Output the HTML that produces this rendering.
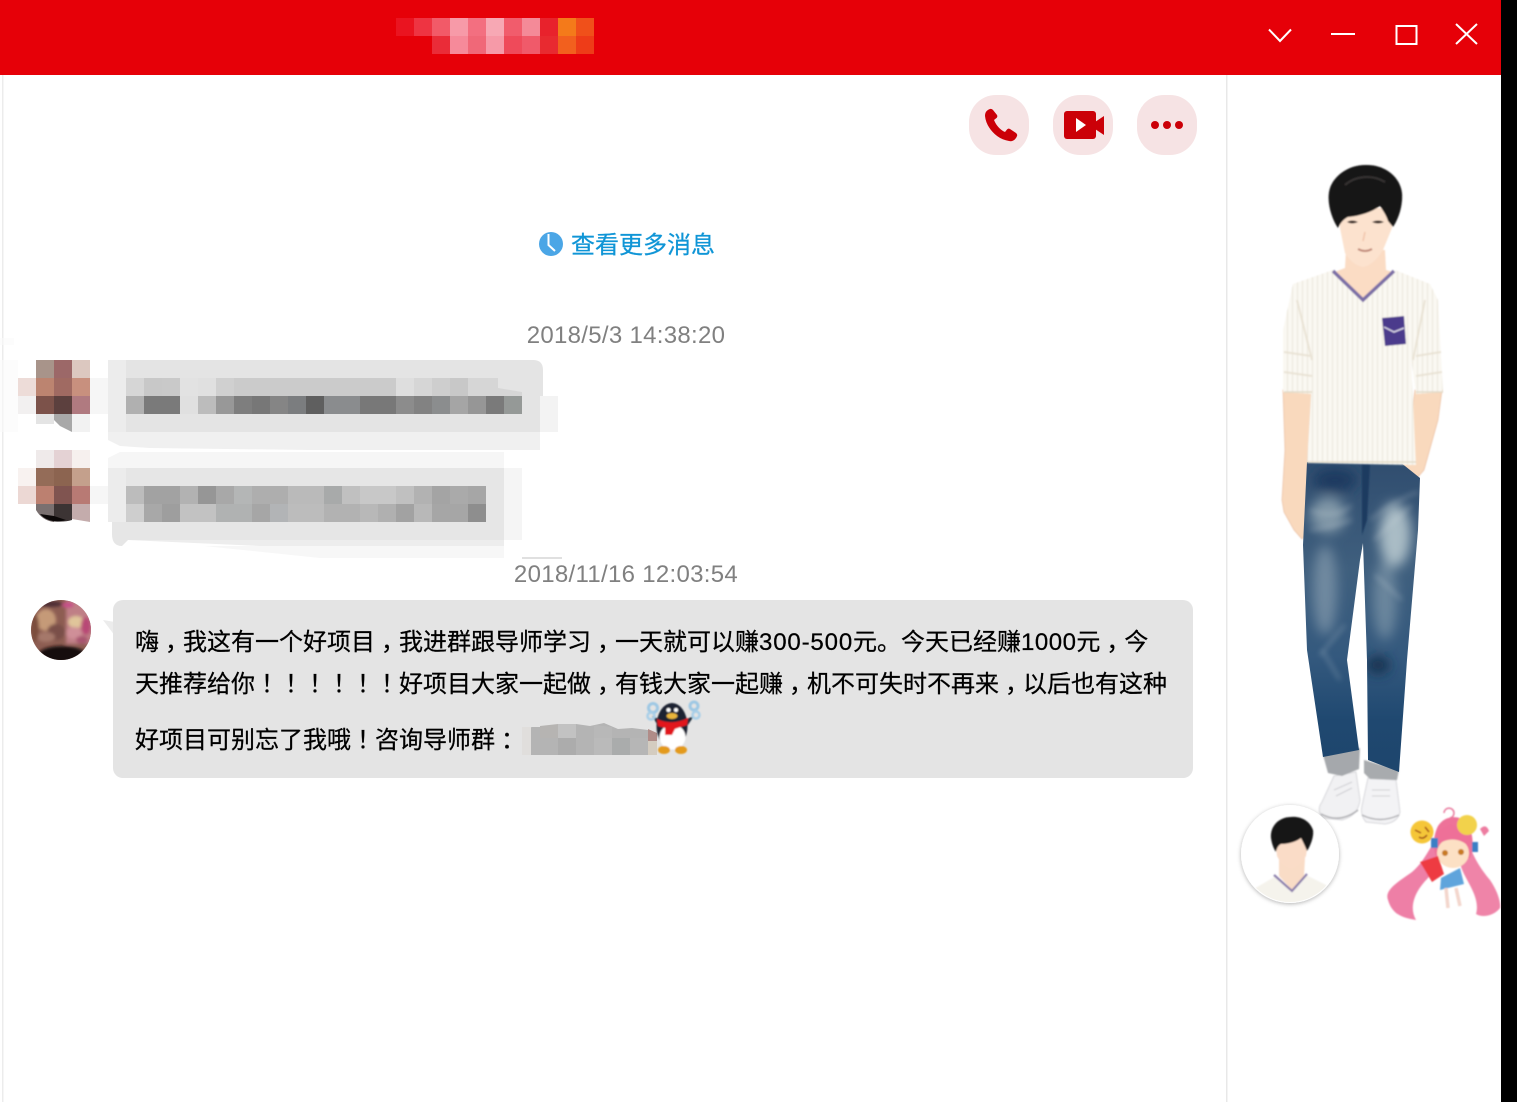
<!DOCTYPE html>
<html lang="zh"><head><meta charset="utf-8"><title>聊天</title>
<style>
html,body{margin:0;padding:0;background:#fff;width:1517px;height:1102px;overflow:hidden}
#g{position:absolute;left:0;top:0}
.t{position:absolute;white-space:nowrap;font-family:"Liberation Sans","Noto Sans CJK SC",sans-serif;font-size:24px;line-height:30px;color:#000;-webkit-text-stroke:.25px currentColor}
.c{color:#808080;width:300px;text-align:center;left:476px;-webkit-text-stroke:0}
.p{position:relative;left:6px}
.d{letter-spacing:.85px}
.e{letter-spacing:.5px}
</style></head><body>
<svg id="g" width="1517" height="1102" viewBox="0 0 1517 1102" xmlns="http://www.w3.org/2000/svg">
<defs>
<filter id="b1" x="-10%" y="-10%" width="120%" height="120%"><feGaussianBlur stdDeviation=".7"/></filter>
<filter id="b2" x="-30%" y="-30%" width="160%" height="160%"><feGaussianBlur stdDeviation="1.500"/></filter>
<filter id="b3" x="-30%" y="-30%" width="160%" height="160%"><feGaussianBlur stdDeviation="3"/></filter>
<filter id="b6" x="-50%" y="-50%" width="200%" height="200%"><feGaussianBlur stdDeviation="6"/></filter>
<filter id="sh" x="-20%" y="-20%" width="140%" height="140%"><feDropShadow dx="0" dy="1" stdDeviation="2" flood-color="#000" flood-opacity=".3"/></filter>
<linearGradient id="jean" x1="0" y1="0" x2="0" y2="1"><stop offset="0" stop-color="#2f4c6e"/><stop offset=".35" stop-color="#3f5f7e"/><stop offset=".62" stop-color="#34597e"/><stop offset=".82" stop-color="#1f4870"/><stop offset="1" stop-color="#1e456c"/></linearGradient>
<pattern id="stripe" width="5" height="6" patternUnits="userSpaceOnUse"><rect width="5" height="6" fill="#faf8f2"/><rect x="2" width="1" height="6" fill="#ebe7dc"/></pattern>
<clipPath id="av"><circle cx="61" cy="630" r="30"/></clipPath>
<clipPath id="av2"><circle cx="1290" cy="854" r="48"/></clipPath>
<clipPath id="jc"><path d="M1307 462 L1400 462 L1420 478 L1418 530 L1407 660 L1399 772 L1368 760 L1367 660 L1363 543 L1360 560 L1347 660 L1359 750 L1323 757 L1307 650 L1303 545Z"/></clipPath>
</defs>

<!-- frame -->
<rect x="2" y="75" width="1.5" height="1027" fill="#ececec"/>
<rect x="1226" y="75" width="1.5" height="1027" fill="#e8e8e8"/>
<rect x="0" y="0" width="1501" height="75" fill="#e60008"/>
<rect x="1501" y="0" width="16" height="1102" fill="#000"/>

<!-- mosaic title -->
<g>
<rect x="396" y="18" width="18" height="18" fill="#ea1420"/><rect x="414" y="18" width="18" height="18" fill="#ee3442"/><rect x="432" y="18" width="18" height="18" fill="#f25a68"/><rect x="450" y="18" width="18" height="18" fill="#f79aa8"/><rect x="468" y="18" width="18" height="18" fill="#f36f80"/><rect x="486" y="18" width="18" height="18" fill="#f7a8b4"/><rect x="504" y="18" width="18" height="18" fill="#f15c6c"/><rect x="522" y="18" width="18" height="18" fill="#f48a98"/><rect x="540" y="18" width="18" height="18" fill="#e8222c"/><rect x="558" y="18" width="18" height="18" fill="#f47a1a"/><rect x="576" y="18" width="18" height="18" fill="#f0501a"/>
<rect x="432" y="36" width="18" height="18" fill="#ea2c38"/><rect x="450" y="36" width="18" height="18" fill="#f68a9a"/><rect x="468" y="36" width="18" height="18" fill="#f06878"/><rect x="486" y="36" width="18" height="18" fill="#f69aa8"/><rect x="504" y="36" width="18" height="18" fill="#ef4a5a"/><rect x="522" y="36" width="18" height="18" fill="#f05a6a"/><rect x="540" y="36" width="18" height="18" fill="#e82a30"/><rect x="558" y="36" width="18" height="18" fill="#f2601e"/><rect x="576" y="36" width="18" height="18" fill="#ee3c18"/>
</g>

<!-- window controls -->
<g fill="none" stroke="#fff" stroke-width="2">
<path d="M1269 29.5 L1280 41 L1291 29.5"/>
<path d="M1331 34 H1355"/>
<rect x="1396.5" y="26" width="20" height="18"/>
<path d="M1456 24 L1477 44 M1477 24 L1456 44"/>
</g>

<!-- action buttons -->
<g fill="#f6e3e4">
<rect x="969" y="95" width="60" height="60" rx="27"/>
<rect x="1053" y="95" width="60" height="60" rx="27"/>
<rect x="1137" y="95" width="60" height="60" rx="27"/>
</g>
<g fill="#cb0008">
<path d="M990 109 C987 110 985 112 985 116 C986 127 996 139 1009 141 C1013 142 1016 139 1017 136 C1017.500 135 1017 134 1016 133 L1010 129 C1009 128.500 1008 128.500 1007 129.500 L1005 132 C1000 130 996 125 994 120 L996.500 118 C997.500 117 997.500 116 997 115 L993 110 C992 109 991 108.700 990 109Z"/>
<rect x="1064" y="111" width="32" height="28" rx="3"/>
<path d="M1095 122 L1104 116 V135 L1095 129Z"/>
<circle cx="1155" cy="125" r="4"/><circle cx="1167" cy="125" r="4"/><circle cx="1179" cy="125" r="4"/>
</g>
<path d="M1076 118 L1086 125 L1076 132Z" fill="#fff"/>

<!-- clock -->
<circle cx="551" cy="244" r="12" fill="#4ba6e6"/>
<path d="M548.500 234 V245 L555 251" fill="none" stroke="#fff" stroke-width="2"/>

<!-- mosaic avatars -->
<g>
<rect x="36" y="360" width="18" height="18" fill="#a8948a"/><rect x="54" y="360" width="18" height="18" fill="#9c6868"/><rect x="72" y="360" width="18" height="18" fill="#dcc8c0"/>
<rect x="18" y="378" width="18" height="18" fill="#eddcd8"/><rect x="36" y="378" width="18" height="18" fill="#bc8470"/><rect x="54" y="378" width="18" height="18" fill="#a06a62"/><rect x="72" y="378" width="18" height="18" fill="#c8907e"/>
<rect x="18" y="396" width="18" height="18" fill="#f2f0f0"/><rect x="36" y="396" width="18" height="18" fill="#7c524a"/><rect x="54" y="396" width="18" height="18" fill="#5c403e"/><rect x="72" y="396" width="18" height="18" fill="#b07a80"/>
<rect x="36" y="414" width="18" height="10" fill="#e4e4e4"/><path d="M54 414H72V432L60 426L54 420Z" fill="#a8a8a8"/><rect x="72" y="414" width="18" height="18" fill="#f2f2f2"/>
<rect x="36" y="450" width="18" height="18" fill="#efeaea"/><rect x="54" y="450" width="18" height="18" fill="#e4d2d4"/><rect x="72" y="450" width="18" height="18" fill="#f6f0ee"/>
<rect x="18" y="468" width="18" height="18" fill="#f8f2f0"/><rect x="36" y="468" width="18" height="18" fill="#946c58"/><rect x="54" y="468" width="18" height="18" fill="#8c6450"/><rect x="72" y="468" width="18" height="18" fill="#c4a08c"/>
<rect x="18" y="486" width="18" height="18" fill="#ecd8d4"/><rect x="36" y="486" width="18" height="18" fill="#bc8070"/><rect x="54" y="486" width="18" height="18" fill="#805450"/><rect x="72" y="486" width="18" height="18" fill="#b87a74"/>
<path d="M36 504H54V522C46 521 40 517 36 510Z" fill="#7a7070"/><path d="M54 504H72V520C66 522 58 522 50 521L54 521Z" fill="#3c3434"/><path d="M40 514C46 521 56 523 66 520L54 516Z" fill="#0c0808"/><path d="M72 504H90V522L72 519Z" fill="#c4acac"/>
</g>

<!-- mosaic bubble 1 -->
<path d="M108 360H533Q543 360 543 370V432H108Z" fill="#e4e4e4"/>
<rect x="108" y="360" width="18" height="72" fill="#ececec"/>
<path d="M108 432H540V450H310L150 448L120 446L108 440Z" fill="#f0f0f0"/>
<rect x="540" y="396" width="18" height="36" fill="#f3f3f3"/>
<path d="M0 338H14V345H0ZM0 360H18V432H0Z" fill="#fafafa" opacity=".6"/>
<g>
<rect x="90" y="378" width="18" height="36" fill="#f6f6f6"/>
<rect x="126" y="378" width="18" height="18" fill="#d6d6d6"/><rect x="144" y="378" width="18" height="18" fill="#c8c8c8"/><rect x="162" y="378" width="18" height="18" fill="#c9c9c9"/><rect x="180" y="378" width="18" height="18" fill="#e2e2e2"/><rect x="198" y="378" width="18" height="18" fill="#e0e0e0"/><rect x="216" y="378" width="18" height="18" fill="#d0d0d0"/><rect x="234" y="378" width="162" height="18" fill="#cbcbcb"/><rect x="396" y="378" width="18" height="18" fill="#dedede"/><rect x="414" y="378" width="18" height="18" fill="#d6d6d6"/><rect x="432" y="378" width="18" height="18" fill="#cecece"/><rect x="450" y="378" width="18" height="18" fill="#c8c8c8"/><path d="M468 378H498V388L522 392V396H468Z" fill="#d6d6d6"/>
<rect x="126" y="396" width="18" height="18" fill="#b0b0b0"/><rect x="144" y="396" width="36" height="18" fill="#7a7a7a"/><rect x="180" y="396" width="18" height="18" fill="#e0e0e0"/><rect x="198" y="396" width="18" height="18" fill="#bcbcbc"/><rect x="216" y="396" width="18" height="18" fill="#989898"/><rect x="234" y="396" width="18" height="18" fill="#7e7e7e"/><rect x="252" y="396" width="18" height="18" fill="#777"/><rect x="270" y="396" width="18" height="18" fill="#858585"/><rect x="288" y="396" width="18" height="18" fill="#7b7d7f"/><rect x="306" y="396" width="18" height="18" fill="#5f5f5f"/><rect x="324" y="396" width="36" height="18" fill="#8a8c8e"/><rect x="360" y="396" width="36" height="18" fill="#787878"/><rect x="396" y="396" width="18" height="18" fill="#8c8c8c"/><rect x="414" y="396" width="18" height="18" fill="#828282"/><rect x="432" y="396" width="18" height="18" fill="#8b8d8e"/><rect x="450" y="396" width="18" height="18" fill="#a5a5a5"/><rect x="468" y="396" width="18" height="18" fill="#969696"/><rect x="486" y="396" width="18" height="18" fill="#7a7a7a"/><rect x="504" y="396" width="18" height="18" fill="#959997"/>
</g>

<!-- mosaic bubble 2 -->
<path d="M108 468H504V540H128L122 546Q112 546 112 534V522H108Z" fill="#e6e6e6"/>
<path d="M128 540H504V546L260 546Z" fill="#ededed"/>
<rect x="108" y="468" width="18" height="54" fill="#ececec"/>
<rect x="504" y="468" width="18" height="72" fill="#f5f5f5"/>
<path d="M120 452H504V468H108V458Z" fill="#f6f6f6"/>
<path d="M204 546H504V558H320Z" fill="#f7f7f7"/>
<rect x="90" y="486" width="18" height="18" fill="#f6f6f6"/>
<rect x="522" y="557" width="40" height="2" fill="#e0e0e0"/>
<g>
<rect x="126" y="486" width="18" height="18" fill="#bcbcbc"/><rect x="144" y="486" width="36" height="18" fill="#a2a2a2"/><rect x="180" y="486" width="18" height="18" fill="#b2b2b2"/><rect x="198" y="486" width="18" height="18" fill="#969696"/><rect x="216" y="486" width="18" height="18" fill="#a8a8a8"/><rect x="234" y="486" width="18" height="18" fill="#b4b6b6"/><rect x="252" y="486" width="36" height="18" fill="#aeaeae"/><rect x="288" y="486" width="36" height="18" fill="#bababa"/><rect x="324" y="486" width="18" height="18" fill="#a8aaaa"/><rect x="342" y="486" width="18" height="18" fill="#c0c0c0"/><rect x="360" y="486" width="36" height="18" fill="#c8c8c8"/><rect x="396" y="486" width="18" height="18" fill="#c0c0c0"/><rect x="414" y="486" width="18" height="18" fill="#b2b2b2"/><rect x="432" y="486" width="18" height="18" fill="#a4a4a4"/><rect x="450" y="486" width="18" height="18" fill="#aaa"/><rect x="468" y="486" width="18" height="18" fill="#a6a6a6"/>
<rect x="126" y="504" width="18" height="18" fill="#cecece"/><rect x="144" y="504" width="18" height="18" fill="#a8a8a8"/><rect x="162" y="504" width="18" height="18" fill="#9e9e9e"/><rect x="180" y="504" width="36" height="18" fill="#c2c2c2"/><rect x="216" y="504" width="36" height="18" fill="#b0b2b2"/><rect x="252" y="504" width="18" height="18" fill="#a6a6a6"/><rect x="270" y="504" width="18" height="18" fill="#b2b4b6"/><rect x="288" y="504" width="36" height="18" fill="#bcbcbc"/><rect x="324" y="504" width="36" height="18" fill="#b2b2b2"/><rect x="360" y="504" width="18" height="18" fill="#b8b8b8"/><rect x="378" y="504" width="18" height="18" fill="#b0b0b0"/><rect x="396" y="504" width="18" height="18" fill="#a2a2a2"/><rect x="414" y="504" width="18" height="18" fill="#b8b8b8"/><rect x="432" y="504" width="36" height="18" fill="#a6a6a6"/><rect x="468" y="504" width="18" height="18" fill="#8e8e8e"/>
</g>

<!-- third avatar -->
<g clip-path="url(#av)">
<rect x="31" y="600" width="60" height="60" fill="#8d5d52"/>
<g filter="url(#b2)">
<rect x="66" y="600" width="28" height="44" fill="#bf7f86"/>
<ellipse cx="76" cy="622" rx="8" ry="6" fill="#e0c59a"/>
<ellipse cx="74" cy="633" rx="8" ry="6" fill="#cf8f98"/>
<ellipse cx="86" cy="626" rx="5" ry="9" fill="#b84a76"/>
<ellipse cx="82" cy="640" rx="6" ry="4" fill="#a85470"/>
<ellipse cx="46" cy="620" rx="10" ry="11" fill="#c59a78"/>
<ellipse cx="56" cy="632" rx="9" ry="8" fill="#7a5048"/>
<ellipse cx="46" cy="637" rx="9" ry="5" fill="#a5786a"/>
<ellipse cx="62" cy="655" rx="24" ry="9" fill="#17110f"/>
<ellipse cx="35" cy="628" rx="4" ry="14" fill="#7c4d3e"/>
<ellipse cx="50" cy="604" rx="13" ry="3" fill="#4e2f36"/>
<ellipse cx="68" cy="605" rx="6" ry="3" fill="#c65088"/>
</g>
</g>

<!-- bubble 3 -->
<path d="M103 620 L115 622 V636Z" fill="#ececec"/>
<rect x="113" y="600" width="1080" height="178" rx="10" fill="#e4e4e4"/>
<!-- mosaic number -->
<path d="M522 755V730L532 727H540L556 725L576 724L590 726L604 723L618 729L632 728L648 730L657 735V755Z" fill="#b4b4b4"/>
<rect x="522" y="727" width="9" height="28" fill="#e0dedc"/>
<path d="M558 724L576 724V738H558Z" fill="#c2c2c2"/>
<path d="M540 726L558 724V738H540Z" fill="#b6b4b2"/>
<path d="M594 725L612 727V738H594Z" fill="#b8b8b8"/>
<rect x="612" y="738" width="18" height="17" fill="#aaacac"/>
<rect x="558" y="738" width="18" height="17" fill="#acacac"/>
<rect x="594" y="738" width="18" height="17" fill="#bababa"/>
<rect x="630" y="738" width="18" height="17" fill="#b6b6b6"/>
<path d="M648 729L657 733V741H648Z" fill="#b08c88"/>
<path d="M648 741H657V755H648Z" fill="#d4ccc0"/>

<!-- QQ penguin -->
<g filter="url(#b1)">
<path d="M652 716 L662 732 L666 722Z" fill="#1c2a3a"/>
<path d="M694 716 L683 732 L679 722Z" fill="#1c2a3a"/>
<circle cx="653" cy="708" r="4.500" fill="none" stroke="#9ec8e4" stroke-width="3"/>
<circle cx="651" cy="716" r="3.500" fill="none" stroke="#a8cfe8" stroke-width="2.500"/>
<circle cx="694" cy="706" r="4" fill="none" stroke="#9ec8e4" stroke-width="3"/>
<circle cx="696" cy="715" r="3.500" fill="none" stroke="#a8cfe8" stroke-width="2.500"/>
<ellipse cx="672" cy="726" rx="15.500" ry="23" fill="#1a2330"/>
<ellipse cx="672.500" cy="737" rx="13" ry="12.500" fill="#fff"/>
<ellipse cx="672" cy="716" rx="5.500" ry="3" fill="#e9b53a"/>
<circle cx="668.500" cy="710" r="2" fill="#fff"/><circle cx="676" cy="710" r="2" fill="#fff"/>
<path d="M657 719 Q672 726 688 718 L687 725 L675 729 L672 735 L665 735 L665 728 L658 726Z" fill="#e2141e"/>
<ellipse cx="664" cy="750" rx="6" ry="4" fill="#e39a1c"/>
<ellipse cx="681" cy="750" rx="6" ry="4" fill="#e39a1c"/>
</g>

<!-- figure -->
<g filter="url(#b1)">
<!-- shoes -->
<path d="M1334 776 L1356 772 L1360 800 Q1358 816 1342 820 L1323 818 Q1316 810 1322 802Z" fill="#f1f1f3" stroke="#d8d8dc"/>
<path d="M1368 778 L1396 780 L1400 812 Q1398 822 1385 824 L1366 822 Q1360 815 1362 806Z" fill="#f3f3f5" stroke="#d8d8dc"/>
<path d="M1321 814 Q1340 824 1358 810 M1362 815 Q1380 824 1399 815" fill="none" stroke="#b0b0b4" stroke-width="1.500"/>
<path d="M1334 790 L1352 782 M1336 796 L1352 788 M1372 790 L1390 790 M1372 796 L1390 796" fill="none" stroke="#cfcfd3"/>
<!-- cuffs -->
<path d="M1323 755 L1360 748 L1359 769 L1342 776 L1328 773Z" fill="#a5a8ac"/>
<path d="M1364 760 L1399 770 L1397 780 L1370 779 L1364 773Z" fill="#a8abae"/>
<!-- arms -->
<path d="M1283 390 L1312 390 L1308 460 L1309 500 L1309 530 L1302 539 L1294 530 L1284 512 L1282 500 L1285 450Z" fill="#f9d9bd" stroke="#e8b898" stroke-width=".6"/>
<path d="M1415 390 L1442 390 L1438 420 L1424 470 L1410 486 L1382 479 L1404 462Z" fill="#f9d9bd" stroke="#e8b898" stroke-width=".6"/>
</g>
<!-- jeans -->
<g clip-path="url(#jc)">
<rect x="1295" y="455" width="135" height="325" fill="url(#jean)"/>
<g filter="url(#b6)">
<ellipse cx="1395" cy="535" rx="16" ry="32" fill="#b6c6cd" opacity=".9"/>
<ellipse cx="1328" cy="515" rx="18" ry="18" fill="#8ea3b0" opacity=".85"/>
<ellipse cx="1325" cy="590" rx="12" ry="45" fill="#8198ab" opacity=".75"/>
<ellipse cx="1385" cy="600" rx="12" ry="40" fill="#8ba2b2" opacity=".6"/>
<ellipse cx="1378" cy="665" rx="12" ry="9" fill="#14304f"/>
<ellipse cx="1335" cy="480" rx="22" ry="12" fill="#1a3a60"/>
</g>
<g filter="url(#b3)" fill="none" stroke="#dfe7ea" stroke-width="2" opacity=".35">
<path d="M1310 510 Q1335 520 1352 505"/>
<path d="M1310 530 Q1330 528 1352 520"/>
<path d="M1370 520 Q1395 500 1418 492"/>
<path d="M1374 540 L1412 505"/>
<path d="M1375 575 L1402 600"/>
<path d="M1322 650 L1340 680"/>
<path d="M1320 655 L1345 625"/>
</g>
<path d="M1362 464 L1370 464 L1367 520 L1362 535Z" fill="#1d3a60" filter="url(#b1)"/>
</g>
<g filter="url(#b1)">
<!-- neck -->
<path d="M1346 250 L1385 250 L1386 270 L1396 273 L1363 302 L1332 273 L1345 268Z" fill="#fbdcc4"/>
<!-- shirt -->
<path d="M1333 270 L1363 301 L1395 270 L1430 284 L1438 300 L1443 392 L1416 394 L1411 358 L1416 465 L1307 463 L1313 360 L1312 394 L1283 392 L1283 330 L1293 284Z" fill="url(#stripe)"/>
<path d="M1284 392H1312M1416 392H1443M1307 462H1416" stroke="#e2dac8" stroke-width="1.500" fill="none"/>
<path d="M1284 372 L1312 376 M1284 352 L1311 356 M1442 372 L1416 376 M1441 352 L1416 356 M1297 300 L1312 360 M1425 300 L1413 360" stroke="#e6dfcf" stroke-width="2" fill="none" opacity=".8"/>
<path d="M1333 271 L1363 300 L1394 271" fill="none" stroke="#7c6ea6" stroke-width="3.500"/>
<path d="M1382 318 L1404 316 L1406 344 L1385 346Z" fill="#4c3a8c"/>
<path d="M1384 327 L1394 332 L1404 328" fill="none" stroke="#d8d4e6" stroke-width="1.500"/>
<!-- face -->
<path d="M1338 208 L1393 208 L1392 228 L1383 250 Q1374 265 1363 267 Q1352 265 1345 253 L1340 228Z" fill="#fce2ce"/>
<path d="M1347 222 Q1352 219 1358 222 Q1352 225 1347 222ZM1372 222 Q1378 219 1384 222 Q1378 225 1372 222Z" fill="#352522"/>
<path d="M1358 249 Q1365 253 1372 249" fill="none" stroke="#c08878" stroke-width="2"/>
<path d="M1365 232 L1363 241" stroke="#f1c4aa" stroke-width="1.500" fill="none"/>
<!-- hair -->
<path d="M1365 165 C1348 165 1334 176 1330 188 C1326 200 1331 218 1338 228 C1341 222 1344 219 1348 217 C1360 216 1372 212 1380 206 C1384 212 1387 217 1388 221 L1393 227 C1399 218 1403 205 1402 193 C1400 176 1384 164 1365 165Z" fill="#171717"/>
<path d="M1345 185 C1355 176 1372 174 1385 182" fill="none" stroke="#45403e" stroke-width="2" opacity=".7"/>
</g>

<!-- small avatar -->
<circle cx="1290" cy="854" r="49" fill="#fff" filter="url(#sh)"/>
<g clip-path="url(#av2)" filter="url(#b1)">
<path d="M1252 890 L1276 876 L1292 890 L1306 875 L1328 886 L1332 910 L1250 910Z" fill="#f5f3ec"/>
<path d="M1279 858 L1305 858 L1304 876 L1292 890 L1279 876Z" fill="#f9dcc6"/>
<path d="M1274 830 H1310 L1306 856 Q1300 866 1291 868 Q1282 866 1277 856Z" fill="#fadcc7"/>
<path d="M1274 875 L1292 891 L1307 874" fill="none" stroke="#8b7eac" stroke-width="2.200"/>
<path d="M1291 817 C1279 817 1270 826 1271 838 C1272 845 1274 849 1276 852 C1277 847 1279 845 1281 844 C1290 844 1297 841 1301 838 C1303 842 1305 846 1307 851 C1311 845 1314 836 1313 830 C1310 821 1301 816 1291 817Z" fill="#141414"/>
</g>

<!-- chibi girl -->
<g filter="url(#b1)">
<path d="M1437 838 C1428 850 1424 862 1412 872 C1398 882 1384 890 1388 900 C1392 914 1402 918 1416 920 C1408 906 1416 890 1428 878 C1436 868 1440 856 1442 846Z" fill="#ee7fa6"/>
<path d="M1468 842 C1474 858 1480 868 1490 880 C1497 890 1501 902 1500 908 C1494 916 1482 918 1476 914 C1480 900 1470 886 1464 874 C1460 866 1458 856 1458 848Z" fill="#ef84a8"/>
<path d="M1438 826 C1444 816 1458 814 1466 822 C1474 832 1474 848 1470 858 L1436 856 C1432 846 1434 834 1438 826Z" fill="#ee7299"/>
<ellipse cx="1453" cy="853" rx="16" ry="15" fill="#fce0c4"/>
<path d="M1437 846 C1444 838 1460 836 1470 848 L1470 832 L1450 824 L1436 832Z" fill="#ee6f98"/>
<circle cx="1445" cy="853" r="3" fill="#c87a20"/><circle cx="1461" cy="852" r="3" fill="#c87a20"/>
<circle cx="1422" cy="832" r="11.500" fill="#f5c638"/>
<path d="M1415 830 L1421 833 M1425 827 L1429 832 M1419 837 Q1423 840 1427 835" stroke="#a04818" stroke-width="1.500" fill="none"/>
<circle cx="1467" cy="825" r="10" fill="#f2d24c"/>
<path d="M1480 829 Q1486 823 1489 831 L1484 836Z" fill="#ed7ca0"/>
<path d="M1444 813 a5 5 0 1 1 6 5" fill="none" stroke="#e8789c" stroke-width="1.500"/>
<path d="M1420 862 L1438 856 L1444 874 L1432 882Z" fill="#ee3a42"/>
<path d="M1441 878 L1460 868 L1464 884 L1440 890Z" fill="#5ea4dc"/>
<path d="M1446 888 L1448 908 M1456 888 L1460 906" stroke="#f3d6cc" stroke-width="3.500"/>
<rect x="1431" y="838" width="7" height="10" fill="#3a7fc4"/>
<rect x="1472" y="842" width="6" height="10" fill="#3a7fc4"/>
</g>
</svg>

<div class="t" style="left:571px;top:231px;color:#0f95d6">查看更多消息</div>
<div class="t c" style="top:321px;letter-spacing:.3px">2018/5/3 14:38:20</div>
<div class="t c" style="top:560px;letter-spacing:.3px">2018/11/16 12:03:54</div>
<div class="t" style="left:135px;top:628px">嗨<span class="p">，</span>我这有一个好项目<span class="p">，</span>我进群跟导师学习<span class="p">，</span>一天就可以赚<span class="d">300-500</span>元。今天已经赚<span class="e">1000</span>元<span class="p">，</span>今</div>
<div class="t" style="left:135px;top:670px">天推荐给你<span class="p">！！！！！！</span>好项目大家一起做<span class="p">，</span>有钱大家一起赚<span class="p">，</span>机不可失时不再来<span class="p">，</span>以后也有这种</div>
<div class="t" style="left:135px;top:726px">好项目可别忘了我哦<span class="p">！</span>咨询导师群<span class="p">：</span></div>
</body></html>
